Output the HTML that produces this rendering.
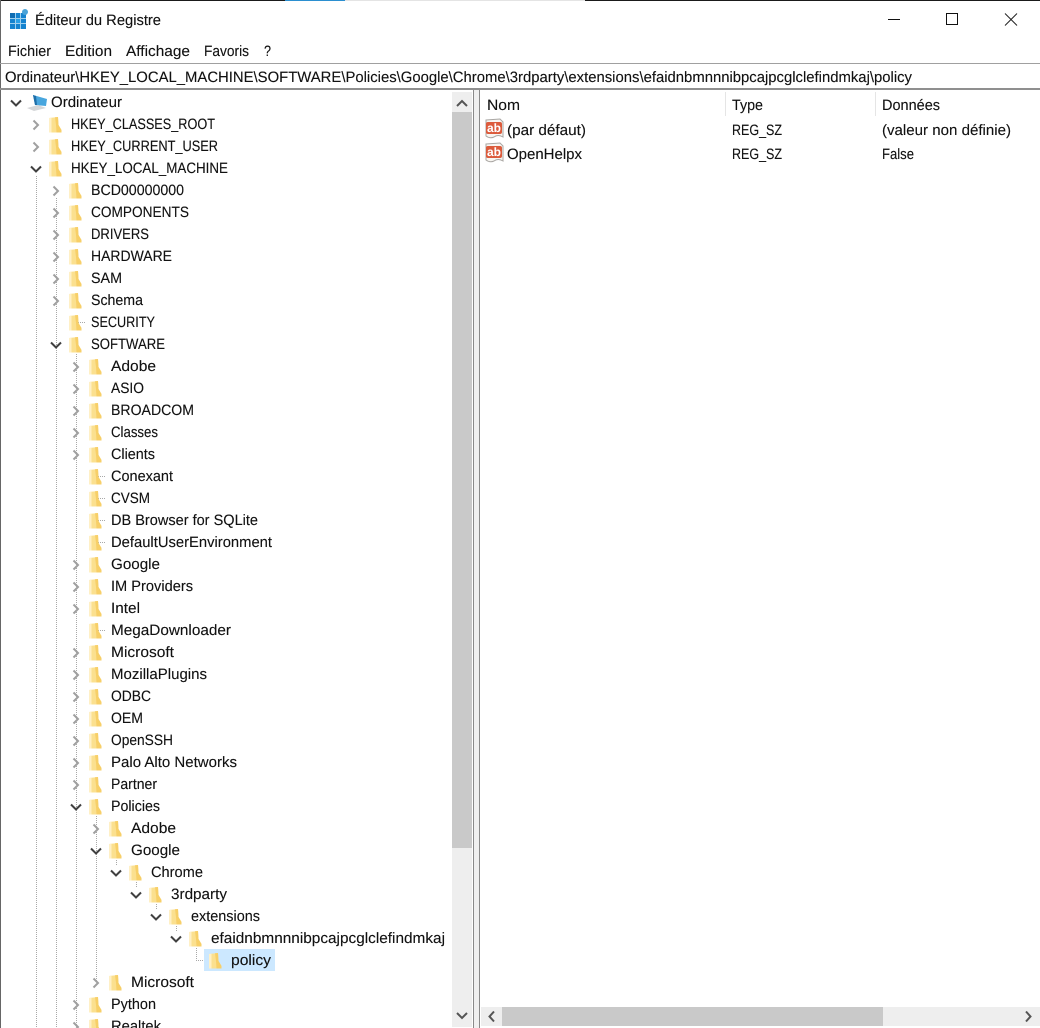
<!DOCTYPE html>
<html lang="fr"><head><meta charset="utf-8"><title>Éditeur du Registre</title>
<style>
html,body{margin:0;padding:0;background:#fff;width:1040px;height:1028px;overflow:hidden}
svg{display:block;position:absolute;left:0;top:0}
text{font-family:"Liberation Sans",sans-serif;font-size:15px;fill:#111;text-rendering:geometricPrecision;stroke:#111;stroke-width:.12}
.d{stroke:#a8a8a8;stroke-width:1;stroke-dasharray:1 1;fill:none}
</style></head><body>
<svg width="1040" height="1028" viewBox="0 0 1040 1028" xmlns="http://www.w3.org/2000/svg">
<defs>
<g id="f"><path d="M0,-6 L9,-7 L9.5,1 L12.5,6 L12.5,8.5 L0,8.5Z" fill="#fbe08f"/><path d="M0,-6 L2.5,-6.3 L2.5,8.5 L0,8.5Z" fill="#fff0c6"/><path d="M6,-6.7 L9,-7 L9.5,1 L12.5,6 L12.5,8.5 L7.5,8.5 L7,1Z" fill="#f7cf68"/></g>
<path id="c" d="M-2.5,-4.5 L2,0 L-2.5,4.5" fill="none" stroke="#a0a0a0" stroke-width="2"/>
<path id="o" d="M-5,-2.5 L0,2.5 L5,-2.5" fill="none" stroke="#404040" stroke-width="2"/>
<g id="ab"><path d="M1,1 L15,0 L18,3 L18,18 Q13,15 9,18 Q5,20 1,17Z" fill="#f8f6f2" stroke="#a9a6a3" stroke-width="1"/><rect x="1" y="3" width="16" height="12" rx="2" fill="#dc5b3c"/></g>
</defs>
<!-- window frame -->
<rect x="0" y="0" width="1040" height="1" fill="#1a1a1a"/>
<rect x="285" y="0" width="60" height="1" fill="#2b8fd0"/>
<rect x="345" y="0" width="240" height="1" fill="#e4e4e4"/>
<rect x="0" y="0" width="1" height="1028" fill="#666"/>
<!-- app icon -->
<g>
<rect x="10" y="13" width="16" height="16" fill="#1583cf"/>
<path d="M15.5,13V29M20.5,13V29M10,18.5H26M10,23.5H26" stroke="#9fd0ee" stroke-width="1"/>
<rect x="10" y="13" width="5" height="5" fill="#0f6db3"/>
<rect x="16" y="19" width="4" height="4" fill="#2aa0e6"/>
<circle cx="25" cy="12" r="3" fill="#4aa3d8"/>
</g>
<text x="35" y="25" textLength="126" lengthAdjust="spacingAndGlyphs">Éditeur du Registre</text>
<path d="M888,19.5H900" stroke="#111"/>
<rect x="946.5" y="13.5" width="11" height="11" fill="none" stroke="#111"/>
<path d="M1005,13.5L1017,25.5M1017,13.5L1005,25.5" stroke="#222"/>
<!-- menu -->
<text x="8" y="56" textLength="43" lengthAdjust="spacingAndGlyphs">Fichier</text>
<text x="65" y="56" textLength="47" lengthAdjust="spacingAndGlyphs">Edition</text>
<text x="126" y="56" textLength="64" lengthAdjust="spacingAndGlyphs">Affichage</text>
<text x="204" y="56" textLength="45" lengthAdjust="spacingAndGlyphs">Favoris</text>
<text x="264" y="56" textLength="7" lengthAdjust="spacingAndGlyphs">?</text>
<!-- address -->
<rect x="0" y="63" width="1040" height="1" fill="#a0a0a0"/>
<rect x="0" y="88" width="1040" height="2" fill="#8f8f8f"/>
<text x="5" y="82" textLength="907" lengthAdjust="spacingAndGlyphs">Ordinateur\HKEY_LOCAL_MACHINE\SOFTWARE\Policies\Google\Chrome\3rdparty\extensions\efaidnbmnnnibpcajpcglclefindmkaj\policy</text>
<!-- vertical scrollbar -->
<rect x="452" y="92" width="20" height="935" fill="#eeeeee"/>
<rect x="452" y="112" width="20" height="736" fill="#c9c9c9"/>
<path d="M457,106L462,101L467,106M457,1013L462,1018L467,1013" fill="none" stroke="#555" stroke-width="2"/>
<!-- splitter -->
<rect x="473" y="90" width="7" height="938" fill="#f0f0f0"/>
<rect x="473" y="90" width="1" height="938" fill="#8a8a8a"/>
<rect x="479" y="90" width="1" height="938" fill="#8a8a8a"/>
<!-- list header -->
<rect x="725" y="92" width="1" height="24" fill="#e5e5e5"/>
<rect x="875" y="92" width="1" height="24" fill="#e5e5e5"/>
<text x="487" y="110" textLength="33" lengthAdjust="spacingAndGlyphs">Nom</text>
<text x="732" y="110" textLength="31" lengthAdjust="spacingAndGlyphs">Type</text>
<text x="882" y="110" textLength="58" lengthAdjust="spacingAndGlyphs">Données</text>
<!-- list rows -->
<use href="#ab" x="485" y="119"/>
<text x="487" y="132" textLength="14" lengthAdjust="spacingAndGlyphs" font-weight="700" style="font-size:12px;fill:#fff;stroke:none">ab</text>
<text x="507" y="135" textLength="79" lengthAdjust="spacingAndGlyphs">(par défaut)</text>
<text x="732" y="135" textLength="50" lengthAdjust="spacingAndGlyphs">REG_SZ</text>
<text x="882" y="135" textLength="129" lengthAdjust="spacingAndGlyphs">(valeur non définie)</text>
<use href="#ab" x="485" y="143"/>
<text x="487" y="156" textLength="14" lengthAdjust="spacingAndGlyphs" font-weight="700" style="font-size:12px;fill:#fff;stroke:none">ab</text>
<text x="507" y="159" textLength="75" lengthAdjust="spacingAndGlyphs">OpenHelpx</text>
<text x="732" y="159" textLength="50" lengthAdjust="spacingAndGlyphs">REG_SZ</text>
<text x="882" y="159" textLength="32" lengthAdjust="spacingAndGlyphs">False</text>
<!-- horizontal scrollbar -->
<rect x="481" y="1007" width="559" height="19" fill="#eeeeee"/>
<rect x="502" y="1007" width="381" height="19" fill="#c9c9c9"/>
<path d="M494,1011.5L489.5,1016.5L494,1021.5M1026,1011.5L1030.5,1016.5L1026,1021.5" fill="none" stroke="#555" stroke-width="2"/>
<!-- tree dotted lines -->
<path class="d" d="M36.5,176V1028M56.5,198V1028M76.5,354V1028M96.5,816V982M116.5,860V866M136.5,882V888M156.5,904V910M176.5,926V932"/>
<path class="d" d="M76,322.5H85M96,476.5H105M96,498.5H105M96,520.5H105M96,542.5H105M96,630.5H105M196.5,948V960.5H205"/>
<!-- selection -->
<rect x="204" y="949" width="71" height="22" fill="#cce8ff"/>
<!-- root -->
<use href="#o" x="16" y="103"/>
<path d="M33,95 L47,99 L46,106 L35,105Z" fill="#48a6de"/><path d="M33,95 L36,96 L37,105 L35,105Z" fill="#1f6ea8"/>
<path d="M27,108 L38,105 L46,108 L34,111Z" fill="#d4d6d8"/>
<text x="51" y="107" textLength="71" lengthAdjust="spacingAndGlyphs">Ordinateur</text>
<!-- depth 1 -->
<use href="#c" x="36" y="125"/><use href="#f" x="49" y="124"/><text x="71" y="129" textLength="144" lengthAdjust="spacingAndGlyphs">HKEY_CLASSES_ROOT</text>
<use href="#c" x="36" y="147"/><use href="#f" x="49" y="146"/><text x="71" y="151" textLength="147" lengthAdjust="spacingAndGlyphs">HKEY_CURRENT_USER</text>
<use href="#o" x="36" y="169"/><use href="#f" x="49" y="168"/><text x="71" y="173" textLength="157" lengthAdjust="spacingAndGlyphs">HKEY_LOCAL_MACHINE</text>
<!-- depth 2 -->
<use href="#c" x="56" y="191"/><use href="#f" x="69" y="190"/><text x="91" y="195" textLength="93" lengthAdjust="spacingAndGlyphs">BCD00000000</text>
<use href="#c" x="56" y="213"/><use href="#f" x="69" y="212"/><text x="91" y="217" textLength="98" lengthAdjust="spacingAndGlyphs">COMPONENTS</text>
<use href="#c" x="56" y="235"/><use href="#f" x="69" y="234"/><text x="91" y="239" textLength="58" lengthAdjust="spacingAndGlyphs">DRIVERS</text>
<use href="#c" x="56" y="257"/><use href="#f" x="69" y="256"/><text x="91" y="261" textLength="81" lengthAdjust="spacingAndGlyphs">HARDWARE</text>
<use href="#c" x="56" y="279"/><use href="#f" x="69" y="278"/><text x="91" y="283" textLength="31" lengthAdjust="spacingAndGlyphs">SAM</text>
<use href="#c" x="56" y="301"/><use href="#f" x="69" y="300"/><text x="91" y="305" textLength="52" lengthAdjust="spacingAndGlyphs">Schema</text>
<use href="#f" x="69" y="322"/><text x="91" y="327" textLength="64" lengthAdjust="spacingAndGlyphs">SECURITY</text>
<use href="#o" x="56" y="345"/><use href="#f" x="69" y="344"/><text x="91" y="349" textLength="74" lengthAdjust="spacingAndGlyphs">SOFTWARE</text>
<!-- depth 3 -->
<use href="#c" x="76" y="367"/><use href="#f" x="89" y="366"/><text x="111" y="371" textLength="45" lengthAdjust="spacingAndGlyphs">Adobe</text>
<use href="#c" x="76" y="389"/><use href="#f" x="89" y="388"/><text x="111" y="393" textLength="33" lengthAdjust="spacingAndGlyphs">ASIO</text>
<use href="#c" x="76" y="411"/><use href="#f" x="89" y="410"/><text x="111" y="415" textLength="83" lengthAdjust="spacingAndGlyphs">BROADCOM</text>
<use href="#c" x="76" y="433"/><use href="#f" x="89" y="432"/><text x="111" y="437" textLength="47" lengthAdjust="spacingAndGlyphs">Classes</text>
<use href="#c" x="76" y="455"/><use href="#f" x="89" y="454"/><text x="111" y="459" textLength="44" lengthAdjust="spacingAndGlyphs">Clients</text>
<use href="#f" x="89" y="476"/><text x="111" y="481" textLength="62" lengthAdjust="spacingAndGlyphs">Conexant</text>
<use href="#f" x="89" y="498"/><text x="111" y="503" textLength="39" lengthAdjust="spacingAndGlyphs">CVSM</text>
<use href="#f" x="89" y="520"/><text x="111" y="525" textLength="147" lengthAdjust="spacingAndGlyphs">DB Browser for SQLite</text>
<use href="#f" x="89" y="542"/><text x="111" y="547" textLength="161" lengthAdjust="spacingAndGlyphs">DefaultUserEnvironment</text>
<use href="#c" x="76" y="565"/><use href="#f" x="89" y="564"/><text x="111" y="569" textLength="49" lengthAdjust="spacingAndGlyphs">Google</text>
<use href="#c" x="76" y="587"/><use href="#f" x="89" y="586"/><text x="111" y="591" textLength="82" lengthAdjust="spacingAndGlyphs">IM Providers</text>
<use href="#c" x="76" y="609"/><use href="#f" x="89" y="608"/><text x="111" y="613" textLength="29" lengthAdjust="spacingAndGlyphs">Intel</text>
<use href="#f" x="89" y="630"/><text x="111" y="635" textLength="120" lengthAdjust="spacingAndGlyphs">MegaDownloader</text>
<use href="#c" x="76" y="653"/><use href="#f" x="89" y="652"/><text x="111" y="657" textLength="63" lengthAdjust="spacingAndGlyphs">Microsoft</text>
<use href="#c" x="76" y="675"/><use href="#f" x="89" y="674"/><text x="111" y="679" textLength="96" lengthAdjust="spacingAndGlyphs">MozillaPlugins</text>
<use href="#c" x="76" y="697"/><use href="#f" x="89" y="696"/><text x="111" y="701" textLength="40" lengthAdjust="spacingAndGlyphs">ODBC</text>
<use href="#c" x="76" y="719"/><use href="#f" x="89" y="718"/><text x="111" y="723" textLength="32" lengthAdjust="spacingAndGlyphs">OEM</text>
<use href="#c" x="76" y="741"/><use href="#f" x="89" y="740"/><text x="111" y="745" textLength="62" lengthAdjust="spacingAndGlyphs">OpenSSH</text>
<use href="#c" x="76" y="763"/><use href="#f" x="89" y="762"/><text x="111" y="767" textLength="126" lengthAdjust="spacingAndGlyphs">Palo Alto Networks</text>
<use href="#c" x="76" y="785"/><use href="#f" x="89" y="784"/><text x="111" y="789" textLength="46" lengthAdjust="spacingAndGlyphs">Partner</text>
<use href="#o" x="76" y="807"/><use href="#f" x="89" y="806"/><text x="111" y="811" textLength="49" lengthAdjust="spacingAndGlyphs">Policies</text>
<!-- deeper -->
<use href="#c" x="96" y="829"/><use href="#f" x="109" y="828"/><text x="131" y="833" textLength="45" lengthAdjust="spacingAndGlyphs">Adobe</text>
<use href="#o" x="96" y="851"/><use href="#f" x="109" y="850"/><text x="131" y="855" textLength="49" lengthAdjust="spacingAndGlyphs">Google</text>
<use href="#o" x="116" y="873"/><use href="#f" x="129" y="872"/><text x="151" y="877" textLength="52" lengthAdjust="spacingAndGlyphs">Chrome</text>
<use href="#o" x="136" y="895"/><use href="#f" x="149" y="894"/><text x="171" y="899" textLength="56" lengthAdjust="spacingAndGlyphs">3rdparty</text>
<use href="#o" x="156" y="917"/><use href="#f" x="169" y="916"/><text x="191" y="921" textLength="69" lengthAdjust="spacingAndGlyphs">extensions</text>
<use href="#o" x="176" y="939"/><use href="#f" x="189" y="938"/><text x="211" y="943" textLength="234" lengthAdjust="spacingAndGlyphs">efaidnbmnnnibpcajpcglclefindmkaj</text>
<use href="#f" x="209" y="960"/><text x="231" y="965" textLength="40" lengthAdjust="spacingAndGlyphs">policy</text>
<use href="#c" x="96" y="983"/><use href="#f" x="109" y="982"/><text x="131" y="987" textLength="63" lengthAdjust="spacingAndGlyphs">Microsoft</text>
<use href="#c" x="76" y="1005"/><use href="#f" x="89" y="1004"/><text x="111" y="1009" textLength="45" lengthAdjust="spacingAndGlyphs">Python</text>
<use href="#c" x="76" y="1027"/><use href="#f" x="89" y="1026"/><text x="111" y="1031" textLength="50" lengthAdjust="spacingAndGlyphs">Realtek</text>
</svg>
</body></html>
